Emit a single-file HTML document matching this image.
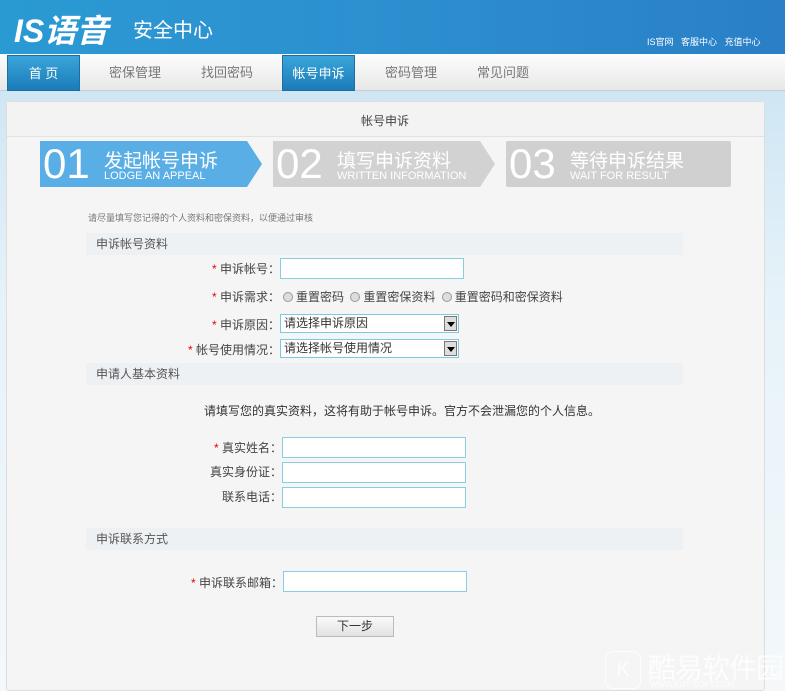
<!DOCTYPE html>
<html><head><meta charset="utf-8"><style>
*{margin:0;padding:0;box-sizing:border-box}
body{width:785px;height:691px;overflow:hidden;position:relative;background:linear-gradient(#cfe6f4 91px,#e6f2f9 300px,#f4f8fb 691px);font-family:"Liberation Sans","Noto Sans CJK SC",sans-serif;font-size:12px;color:#333}
.a{position:absolute;white-space:nowrap}
#hd{left:0;top:0;width:785px;height:54px;background:linear-gradient(90deg,#2a9ad3,#2d8fcf 50%,#2a7fc6)}
#nav{left:0;top:54px;width:785px;height:37px;background:linear-gradient(#fdfdfd,#e8e8e8);border-bottom:1px solid #ccc}
.tab{position:absolute;top:55px;height:36px;line-height:36px;text-align:center;font-size:13px;color:#777}
.on{background:linear-gradient(#3aa5da,#1a7cb8);color:#fff;border:1px solid #1d6ea2}
#pn{left:6px;top:101px;width:759px;height:590px;background:#f5f5f5;border:1px solid #ddd;border-radius:3px}
.step{position:absolute;top:141px;height:46px;color:#fff}
.num{position:absolute;left:3px;top:-1px;font-size:42px;line-height:48px;font-family:"Liberation Sans Narrow","Liberation Sans",sans-serif}
.cn{position:absolute;left:64px;top:5px;font-size:19px}
.en{position:absolute;left:64px;top:29px;font-size:11px;font-family:"Liberation Sans Narrow","Liberation Sans",sans-serif}
.sec{position:absolute;left:86px;width:597px;height:22px;line-height:22px;background:#eef1f4;padding-left:10px;font-size:12px;color:#555}
.lb{position:absolute;text-align:right;font-size:12px;color:#444}
.lb b{color:#e00;font-weight:normal}
.in{position:absolute;width:185px;height:21px;background:#fff;border:1px solid #88cde2}
.sel{position:absolute;width:179px;height:19px;background:#fff;border:1px solid #7ec8e0;font-size:12px;line-height:17px;padding-left:3px}
.sel i{position:absolute;right:1px;top:1px;width:13px;height:15px;background:#ddd;border:1px solid #777}
.sel i:after{content:"";position:absolute;left:2px;top:5px;border:4px solid transparent;border-top:5px solid #000}
.rd{display:inline-block;width:10px;height:10px;border-radius:50%;border:1px solid #999;background:#ddd;vertical-align:-1px;margin:0 3px}
</style></head><body>
<div id="hd" class="a"></div>
<div class="a" style="left:14px;top:6px;font-size:32px;font-weight:bold;font-style:italic;color:#fff">IS语音</div>
<div class="a" style="left:133px;top:14px;font-size:20px;color:#fff">安全中心</div>
<div class="a" style="left:647px;top:35px;font-size:9px;color:#fff">IS官网&nbsp;&nbsp;&nbsp;客服中心&nbsp;&nbsp;&nbsp;充值中心</div>
<div id="nav" class="a"></div>
<div class="tab on" style="left:7px;width:73px">首 页</div>
<div class="tab" style="left:92px;width:86px">密保管理</div>
<div class="tab" style="left:184px;width:86px">找回密码</div>
<div class="tab on" style="left:282px;width:73px">帐号申诉</div>
<div class="tab" style="left:368px;width:86px">密码管理</div>
<div class="tab" style="left:460px;width:86px">常见问题</div>
<div id="pn" class="a"></div>
<div class="a" style="left:7px;top:102px;width:757px;height:35px;background:#f3f3f3;border-bottom:1px solid #e2e2e2"></div>
<div class="a" style="left:361px;top:112px;font-size:12px;color:#444">帐号申诉</div>
<svg class="a" style="left:40px;top:141px" width="692" height="47">
<polygon points="0,0 207,0 222,23 207,46 0,46" fill="#5aaee6"/>
<polygon points="233,0 440,0 455,23 440,46 233,46" fill="#d2d2d2"/>
<rect x="466" y="0" width="225" height="46" rx="2" fill="#d0d0d0"/></svg>
<div class="step" style="left:40px;width:222px"><div class="num">01</div><div class="cn">发起帐号申诉</div><div class="en">LODGE AN APPEAL</div></div>
<div class="step" style="left:273px;width:222px"><div class="num">02</div><div class="cn">填写申诉资料</div><div class="en">WRITTEN INFORMATION</div></div>
<div class="step" style="left:506px;width:222px"><div class="num">03</div><div class="cn">等待申诉结果</div><div class="en">WAIT FOR RESULT</div></div>
<div class="a" style="left:88px;top:211px;font-size:9px;color:#777">请尽量填写您记得的个人资料和密保资料，以便通过审核</div>
<div class="sec" style="top:233px">申诉帐号资料</div>
<div class="lb" style="left:180px;top:260px;width:100px"><b>*</b> 申诉帐号：</div>
<div class="in" style="left:280px;top:258px;width:184px"></div>
<div class="lb" style="left:180px;top:288px;width:100px"><b>*</b> 申诉需求：</div>
<div class="a" style="left:280px;top:288px;font-size:12px;color:#444"><span class="rd"></span>重置密码 <span class="rd"></span>重置密保资料 <span class="rd"></span>重置密码和密保资料</div>
<div class="lb" style="left:180px;top:316px;width:100px"><b>*</b> 申诉原因：</div>
<div class="sel" style="left:280px;top:314px">请选择申诉原因<i></i></div>
<div class="lb" style="left:160px;top:341px;width:120px"><b>*</b> 帐号使用情况：</div>
<div class="sel" style="left:280px;top:339px">请选择帐号使用情况<i></i></div>
<div class="sec" style="top:363px">申请人基本资料</div>
<div class="a" style="left:204px;top:402px;font-size:12px;color:#333">请填写您的真实资料，这将有助于帐号申诉。官方不会泄漏您的个人信息。</div>
<div class="lb" style="left:180px;top:439px;width:102px"><b>*</b> 真实姓名：</div>
<div class="in" style="left:282px;top:437px;width:184px"></div>
<div class="lb" style="left:180px;top:463px;width:102px">真实身份证：</div>
<div class="in" style="left:282px;top:462px;width:184px"></div>
<div class="lb" style="left:180px;top:488px;width:102px">联系电话：</div>
<div class="in" style="left:282px;top:487px;width:184px"></div>
<div class="sec" style="top:528px">申诉联系方式</div>
<div class="lb" style="left:160px;top:574px;width:123px"><b>*</b> 申诉联系邮箱：</div>
<div class="in" style="left:283px;top:571px;width:184px"></div>
<div class="a" style="left:316px;top:616px;width:78px;height:21px;border:1px solid #bbb;background:linear-gradient(#fafafa,#e2e2e2);text-align:center;line-height:19px;font-size:12px;color:#333">下一步</div>
<div class="a" style="left:605px;top:651px;width:36px;height:38px;border:1px solid #fff;border-radius:8px;color:#fff;font-size:20px;text-align:center;line-height:36px;opacity:.8">K</div>
<div class="a" style="left:648px;top:647px;font-size:28px;color:#fff;opacity:.85;letter-spacing:-1px">酷易软件园</div>
<div class="a" style="left:650px;top:680px;font-size:8px;color:#fff;opacity:.85">WWW.KUYISOFT.COM</div>
</body></html>
